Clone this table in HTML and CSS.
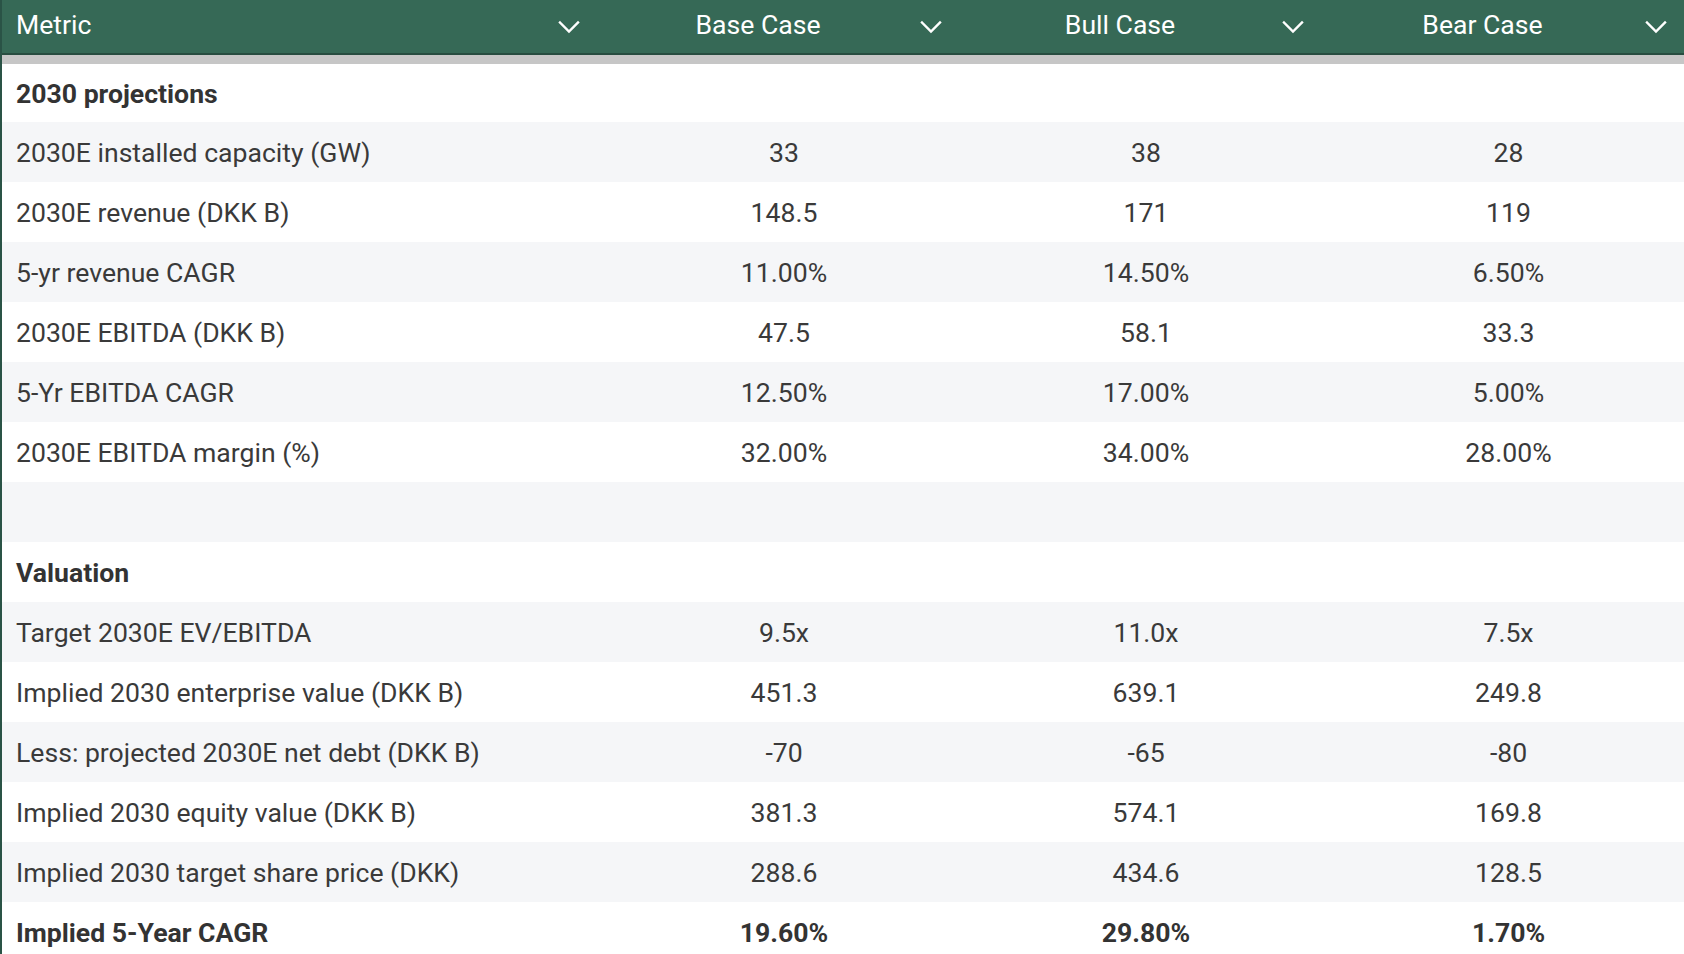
FILE: index.html
```html
<!DOCTYPE html>
<html lang="en">
<head>
<meta charset="utf-8">
<title>Scenario table</title>
<link rel="stylesheet" href="styles.css">
</head>
<body>
<div class="table">
  <div class="thead">
    <div class="th th-metric"><span class="th-label">Metric</span><svg class="chev" viewBox="0 0 24 24"><path d="M6 9l6 6 6-6"/></svg></div>
    <div class="th"><span class="th-label">Base Case</span><svg class="chev" viewBox="0 0 24 24"><path d="M6 9l6 6 6-6"/></svg></div>
    <div class="th"><span class="th-label">Bull Case</span><svg class="chev" viewBox="0 0 24 24"><path d="M6 9l6 6 6-6"/></svg></div>
    <div class="th"><span class="th-label">Bear Case</span><svg class="chev" viewBox="0 0 24 24"><path d="M6 9l6 6 6-6"/></svg></div>
  </div>
  <div class="band"></div>
  <div class="tbody">
    <div class="row section first"><div class="cell metric">2030 projections</div><div class="cell"></div><div class="cell"></div><div class="cell"></div></div>
    <div class="row"><div class="cell metric">2030E installed capacity (GW)</div><div class="cell val">33</div><div class="cell val">38</div><div class="cell val">28</div></div>
    <div class="row"><div class="cell metric">2030E revenue (DKK B)</div><div class="cell val">148.5</div><div class="cell val">171</div><div class="cell val">119</div></div>
    <div class="row"><div class="cell metric">5-yr revenue CAGR</div><div class="cell val">11.00%</div><div class="cell val">14.50%</div><div class="cell val">6.50%</div></div>
    <div class="row"><div class="cell metric">2030E EBITDA (DKK B)</div><div class="cell val">47.5</div><div class="cell val">58.1</div><div class="cell val">33.3</div></div>
    <div class="row"><div class="cell metric">5-Yr EBITDA CAGR</div><div class="cell val">12.50%</div><div class="cell val">17.00%</div><div class="cell val">5.00%</div></div>
    <div class="row"><div class="cell metric">2030E EBITDA margin (%)</div><div class="cell val">32.00%</div><div class="cell val">34.00%</div><div class="cell val">28.00%</div></div>
    <div class="row"><div class="cell metric"></div><div class="cell val"></div><div class="cell val"></div><div class="cell val"></div></div>
    <div class="row section"><div class="cell metric">Valuation</div><div class="cell"></div><div class="cell"></div><div class="cell"></div></div>
    <div class="row"><div class="cell metric">Target 2030E EV/EBITDA</div><div class="cell val">9.5x</div><div class="cell val">11.0x</div><div class="cell val">7.5x</div></div>
    <div class="row"><div class="cell metric">Implied 2030 enterprise value (DKK B)</div><div class="cell val">451.3</div><div class="cell val">639.1</div><div class="cell val">249.8</div></div>
    <div class="row"><div class="cell metric">Less: projected 2030E net debt (DKK B)</div><div class="cell val">-70</div><div class="cell val">-65</div><div class="cell val">-80</div></div>
    <div class="row"><div class="cell metric">Implied 2030 equity value (DKK B)</div><div class="cell val">381.3</div><div class="cell val">574.1</div><div class="cell val">169.8</div></div>
    <div class="row"><div class="cell metric">Implied 2030 target share price (DKK)</div><div class="cell val">288.6</div><div class="cell val">434.6</div><div class="cell val">128.5</div></div>
    <div class="row strong"><div class="cell metric">Implied 5-Year CAGR</div><div class="cell val">19.60%</div><div class="cell val">29.80%</div><div class="cell val">1.70%</div></div>
  </div>
</div>
</body>
</html>
```

FILE: styles.css
```css
html, body {
  margin: 0;
  padding: 0;
  background: #ffffff;
  overflow: hidden;
}

body {
  font-family: Roboto, "Liberation Sans", sans-serif;
  font-size: 26.6px;
  color: #3a3a3a;
  width: 1684px;
  height: 954px;
}

.table {
  border-left: 2px solid #2a5346;
  min-height: 954px;
  box-sizing: border-box;
}

.thead {
  display: grid;
  grid-template-columns: 595px 362px 362px 363px;
  height: 53px;
  background: #366956;
  border-bottom: 2px solid #284d40;
  color: #ffffff;
}

.th {
  display: flex;
  align-items: center;
  padding: 0 10px 0 6px;
}

.th-label {
  flex: 1;
  text-align: center;
  white-space: nowrap;
  padding-bottom: 4px;
}

.th-metric {
  padding-left: 14px;
}

.th-metric .th-label {
  text-align: left;
}

.chev {
  width: 36px;
  height: 36px;
  flex: none;
  fill: none;
  stroke: #ffffff;
  stroke-width: 1.6;
  stroke-linecap: square;
}

.band {
  height: 9px;
  background: #c6c6c6;
}

.row {
  display: grid;
  grid-template-columns: 595px 362px 362px 363px;
  height: 60px;
  align-items: center;
}

.row.first {
  height: 58px;
}

.row:nth-child(even) {
  background: #f5f6f8;
}

.cell {
  white-space: nowrap;
  padding-top: 1px;
}

.metric {
  padding-left: 14px;
}

.val {
  text-align: center;
  padding-left: 12px;
}

.section .metric,
.strong .cell {
  font-weight: 700;
  color: #333333;
}
```
